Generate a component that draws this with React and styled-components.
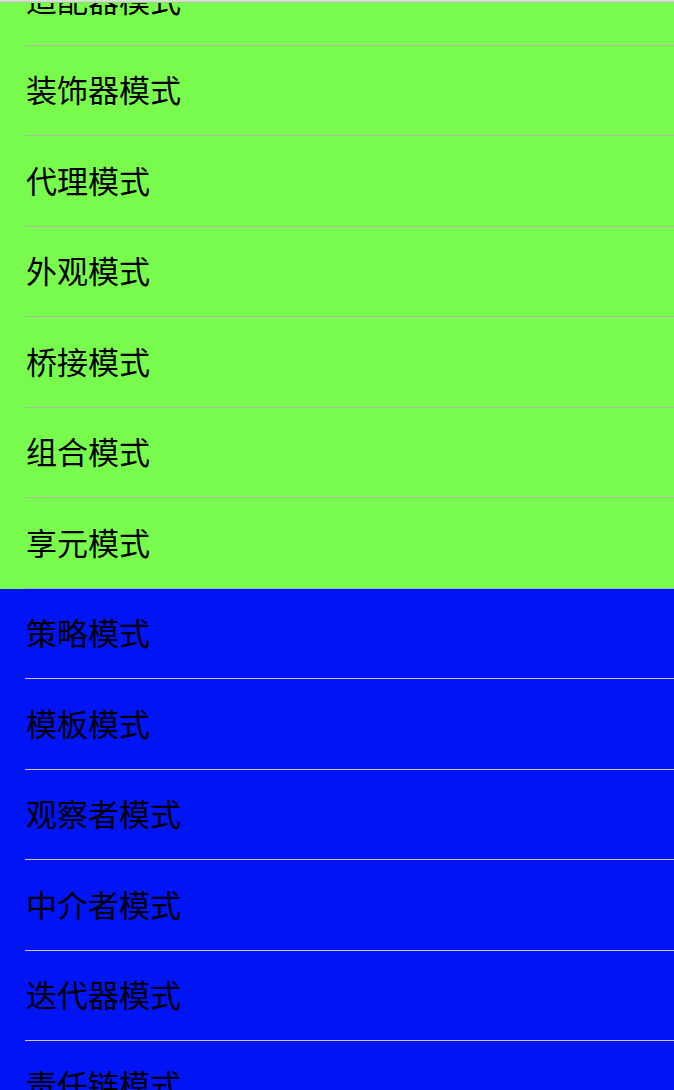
import React from 'react';
import styled, { createGlobalStyle } from 'styled-components';

const GlobalStyle = createGlobalStyle`
  html, body {
    margin: 0;
    padding: 0;
    background: #0014f5;
  }
  body {
    font-family: "Noto Sans CJK SC", "Noto Sans", sans-serif;
  }
`;

const Screen = styled.div`
  width: 674px;
  height: 1090px;
  overflow: hidden;
  display: flex;
  flex-direction: column;
  background: #0014f5;
`;

const NavEdge = styled.div`
  flex: none;
  height: 3px;
  background: linear-gradient(#dde6da 0%, #c9dcc4 55%, #7ccf5e 100%);
  position: relative;
  z-index: 1;
`;

const Scroller = styled.div`
  flex: 1;
  overflow: hidden;
`;

const Content = styled.div`
  margin-top: -47px;
`;

const Section = styled.div`
  background: ${(p) => p.color};
`;

const Row = styled.div`
  height: ${(p) => p.h}px;
  padding-left: 25px;
  display: flex;
  box-sizing: border-box;
`;

const Cell = styled.div`
  flex: 1;
  display: flex;
  align-items: center;
  border-bottom: 1px solid ${(p) => p.line};
  font-size: 31px;
  color: #000;
  padding-left: 1px;
  padding-bottom: 4px;
`;

const PITCH = 90.45;

// integer row heights that keep the 90.45px pitch without blurry lines
const rowHeight = (i) => Math.round(46 + i * PITCH) - (i === 0 ? -44 : Math.round(46 + (i - 1) * PITCH));

const sections = [
  {
    color: '#79fb4d',
    line: '#a9b9a5',
    items: ['适配器模式', '装饰器模式', '代理模式', '外观模式', '桥接模式', '组合模式', '享元模式'],
  },
  {
    color: '#0014f5',
    line: '#c9c9dc',
    items: ['策略模式', '模板模式', '观察者模式', '中介者模式', '迭代器模式', '责任链模式'],
  },
];

const App = () => {
  let index = 0;
  return (
    <Screen>
      <GlobalStyle />
      <NavEdge />
      <Scroller>
        <Content>
          {sections.map((s) => (
            <Section key={s.color} color={s.color}>
              {s.items.map((name) => {
                const h = rowHeight(index++);
                return (
                  <Row key={name} h={h}>
                    <Cell line={s.line}>{name}</Cell>
                  </Row>
                );
              })}
            </Section>
          ))}
        </Content>
      </Scroller>
    </Screen>
  );
};

export default App;
